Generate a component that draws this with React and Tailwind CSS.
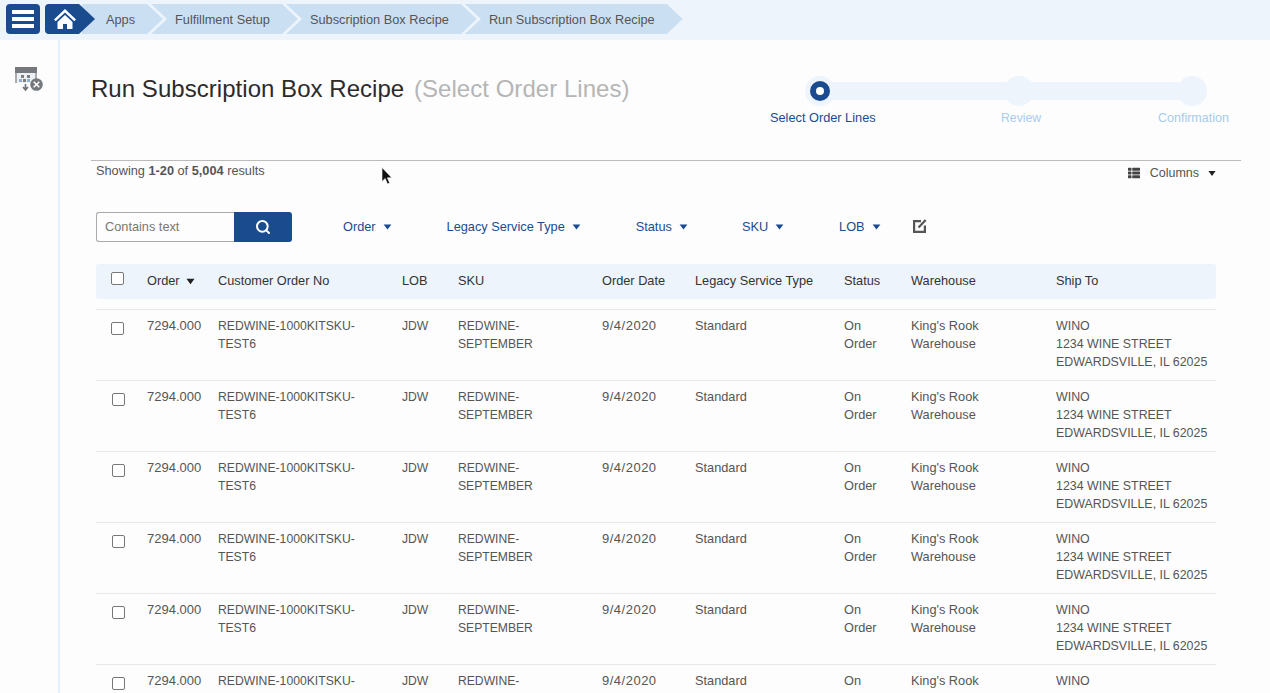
import { Search } from 'lucide-react';
import { FaThList } from 'react-icons/fa';

const crumbs = ['Fulfillment Setup', 'Subscription Box Recipe', 'Run Subscription Box Recipe'];

const filters = [
  { label: 'Order', cls: 'ml-[51px]' },
  { label: 'Legacy Service Type', cls: 'ml-[55px]' },
  { label: 'Status', cls: 'ml-[55px]' },
  { label: 'SKU', cls: 'ml-[54px]' },
  { label: 'LOB', cls: 'ml-[55px]' },
];

const gridCols = 'grid grid-cols-[51px_71px_184px_56px_144px_93px_149px_67px_145px_160px]';

const row = {
  order: '7294.000',
  customer: ['REDWINE-1000KITSKU-', 'TEST6'],
  lob: 'JDW',
  sku: ['REDWINE-', 'SEPTEMBER'],
  date: '9/4/2020',
  service: 'Standard',
  status: ['On', 'Order'],
  warehouse: ["King's Rook", 'Warehouse'],
  shipTo: ['WINO', '1234 WINE STREET', 'EDWARDSVILLE, IL 62025'],
};

const rows = [0, 1, 2, 3, 4, 5];

function Caret({ className }) {
  return (
    <svg viewBox="0 0 10 7" className={className} fill="currentColor">
      <path d="M0.5 0.5h9L5 6.5z" />
    </svg>
  );
}

function Lines({ items, className }) {
  return (
    <div className={className}>
      {items.map((line) => (
        <div key={line}>{line}</div>
      ))}
    </div>
  );
}

function Checkbox({ className = '' }) {
  return (
    <input
      type="checkbox"
      readOnly
      className={`appearance-none block w-[13px] h-[13px] bg-white border border-[#777] rounded-[2px] ${className}`}
    />
  );
}

function WarehouseIcon() {
  return (
    <svg viewBox="0 0 28 26" className="w-[28px] h-[26px]">
      <rect x="0" y="1" width="22" height="6" fill="#75797e" />
      <rect x="0" y="7" width="2" height="10" fill="#a9adb2" />
      <rect x="20" y="7" width="2" height="6" fill="#a9adb2" />
      <rect x="2" y="7" width="18" height="10" fill="#eef1f4" />
      <rect x="6" y="9" width="3" height="3" fill="#7b7f84" />
      <rect x="12" y="9" width="3" height="3" fill="#7b7f84" />
      <rect x="4" y="13" width="3" height="3" fill="#8fb0d3" />
      <rect x="8" y="13" width="3" height="3" fill="#7b7f84" />
      <rect x="12" y="13" width="3" height="3" fill="#8fb0d3" />
      <path d="M10.5 18v5M8 21l2.5 3 2.5-3" stroke="#6f7378" strokeWidth="1.7" fill="none" />
      <circle cx="21.5" cy="18.5" r="6.3" fill="#75797e" />
      <path d="M18.7 15.7l5.6 5.6M24.3 15.7l-5.6 5.6" stroke="#fff" strokeWidth="1.5" />
    </svg>
  );
}

function EditIcon() {
  return (
    <svg viewBox="0 0 14 14" className="w-[14px] h-[14px] ml-[32px] -mt-[3px]" fill="none" stroke="#555">
      <path d="M8 2.1H1.1v10.8h10.8V6.5" strokeWidth="2.2" />
      <path d="M5.5 8.5L12.7 1" strokeWidth="2.2" />
    </svg>
  );
}

export default function App() {
  return (
    <div className="w-[1270px] h-[693px] overflow-hidden relative bg-[#fdfdfd] text-[#555] font-['Liberation_Sans',Arial,sans-serif] text-[12.75px] leading-[18px]">
      {/* Breadcrumb bar */}
      <div className="h-[40px] bg-[#edf4fb] flex items-start pt-[4px] pl-[6px]">
        <div className="w-[34px] h-[30px] bg-[#1a4b8f] rounded-[4px] flex flex-col justify-center gap-[3px] px-[6px]">
          <div className="h-[4px] bg-white" />
          <div className="h-[4px] bg-white" />
          <div className="h-[4px] bg-white" />
        </div>
        <div className="flex ml-[5px]">
          <div className="relative z-10 w-[50px] h-[30px] bg-[#1a4b8f] rounded-l-[4px] pl-[9px] flex items-center [clip-path:polygon(0_0,34px_0,100%_50%,34px_100%,0_100%)]">
            <svg viewBox="0 0 22 20" className="w-[22px] h-[20px]" fill="white">
              <path d="M11 0L0 10.5l1.7 1.8L11 3.5l9.3 8.8 1.7-1.8z" />
              <path d="M11 6L3.5 13v7h5.5v-5h4v5h5.5v-7z" />
            </svg>
          </div>
          <div className="-ml-[13px] h-[30px] w-[81px] pl-[24px] pt-[1px] flex items-center bg-[#cbdff3] [clip-path:polygon(0_0,calc(100%-16px)_0,100%_50%,calc(100%-16px)_100%,0_100%)]">
            Apps
          </div>
          {crumbs.map((crumb) => (
            <div
              key={crumb}
              className="-ml-[12px] h-[30px] pl-[24px] pr-[28px] pt-[1px] flex items-center bg-[#cbdff3] [clip-path:polygon(0_0,calc(100%-16px)_0,100%_50%,calc(100%-16px)_100%,0_100%,16px_50%)]"
            >
              {crumb}
            </div>
          ))}
        </div>
      </div>

      <div className="flex">
        {/* Sidebar */}
        <div className="w-[60px] h-[653px] shrink-0 border-r-[2px] border-[#e6f0fa] pl-[15px] pt-[26px]">
          <WarehouseIcon />
        </div>

        {/* Main */}
        <div className="w-[1150px] ml-[31px]">
          <div className="h-[120px] flex justify-between">
            <h1 className="pt-[35px] text-[24px] leading-[28px] tracking-[0.04px] text-[#2b2b2b]">
              Run Subscription Box Recipe <span className="text-[#b5b5b5] ml-[3px]">(Select Order Lines)</span>
            </h1>
            <div className="relative w-[480px]">
              <div className="absolute left-[60px] top-[42px] w-[370px] h-[18px] bg-[#edf4fb]" />
              <div className="absolute left-[44px] top-[36px] w-[30px] h-[30px] rounded-full bg-[#edf4fb] flex items-center justify-center">
                <div className="w-[20px] h-[20px] rounded-full bg-[#1a4b8f] flex items-center justify-center">
                  <div className="w-[8px] h-[8px] rounded-full bg-white" />
                </div>
              </div>
              <div className="absolute left-[243px] top-[36px] w-[30px] h-[30px] rounded-full bg-[#edf4fb]" />
              <div className="absolute left-[416px] top-[36px] w-[30px] h-[30px] rounded-full bg-[#edf4fb]" />
              <div className="absolute left-[9px] top-[69px] text-[#1a4b8f]">Select Order Lines</div>
              <div className="absolute left-[240px] top-[69px] text-[12.25px] text-[#a9cbec]">Review</div>
              <div className="absolute left-[397px] top-[69px] text-[12.5px] text-[#a9cbec]">Confirmation</div>
            </div>
          </div>

          <div className="border-t border-[#bbb] h-[52px] pl-[5px] pr-[25px] pt-[1px] flex justify-between items-start">
            <div>
              Showing <b>1-20</b> of <b>5,004</b> results
            </div>
            <div className="flex items-center pt-[2px]">
              <FaThList className="w-[12px] h-[12px] text-[#444] mr-[10px]" />
              <span className="text-[12.5px]">Columns</span>
              <Caret className="w-[8px] h-[7px] ml-[9px] text-[#222]" />
            </div>
          </div>

          <div className="flex items-center h-[30px] pl-[5px]">
            <div className="w-[138px] h-[30px] border border-[#aaa] border-r-0 rounded-l-[3px] pl-[8px] flex items-center text-[#777]">
              Contains text
            </div>
            <div className="w-[58px] h-[30px] bg-[#1a4b8f] rounded-r-[3px] flex items-center justify-center">
              <Search className="w-[16px] h-[16px] text-white" strokeWidth={3} />
            </div>
            {filters.map((f) => (
              <div key={f.label} className={`flex items-center text-[#1a4b8f] ${f.cls}`}>
                {f.label}
                <Caret className="w-[9px] h-[6px] ml-[7px]" />
              </div>
            ))}
            <EditIcon />
          </div>

          {/* Table */}
          <div className={`${gridCols} mt-[22px] ml-[5px] w-[1120px] h-[35px] pb-[1px] bg-[#edf4fb] rounded-[3px] items-center text-[#333] mb-[10px]`}>
            <div className="pl-[15px] -mt-[6px]">
              <Checkbox />
            </div>
            <div className="flex items-center">
              Order
              <Caret className="w-[9px] h-[7px] ml-[6px] text-[#222]" />
            </div>
            <div>Customer Order No</div>
            <div>LOB</div>
            <div>SKU</div>
            <div>Order Date</div>
            <div>Legacy Service Type</div>
            <div>Status</div>
            <div>Warehouse</div>
            <div>Ship To</div>
          </div>

          <div className="ml-[5px] w-[1120px]">
            {rows.map((i) => (
              <div key={i} className={`${gridCols} h-[71px] border-t border-[#e8e8e8] pt-[7px]`}>
                <div className={i === 0 ? 'pl-[15px] pt-[5px]' : 'pl-[16px] pt-[5px]'}>
                  <Checkbox />
                </div>
                <div className="text-[13px]">{row.order}</div>
                <Lines items={row.customer} className="text-[12.2px]" />
                <div className="text-[12.15px]">{row.lob}</div>
                <Lines items={row.sku} className="text-[12.15px]" />
                <div className="text-[13px] tracking-[0.5px]">{row.date}</div>
                <div>{row.service}</div>
                <Lines items={row.status} />
                <Lines items={row.warehouse} />
                <Lines items={row.shipTo} className="text-[12.4px]" />
              </div>
            ))}
          </div>
        </div>
      </div>

      {/* Mouse pointer */}
      <svg viewBox="0 0 12 18" className="absolute left-[381px] top-[167px] w-[12px] h-[18px]">
        <path d="M1 0.5v14l3.2-3 2.3 5.5 2.2-1-2.3-5.2h4.4z" fill="#111" stroke="#fff" strokeWidth="0.6" />
      </svg>
    </div>
  );
}
